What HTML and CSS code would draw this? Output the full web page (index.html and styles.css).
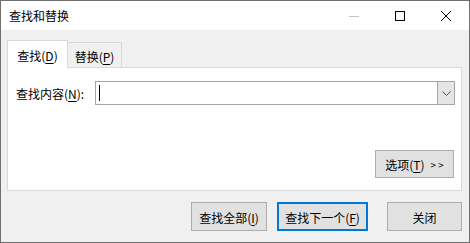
FILE: index.html
```html
<!DOCTYPE html>
<html lang="zh-CN">

<head>
  <meta charset="UTF-8">
  <title>查找和替换</title>
  <link rel="stylesheet" href="styles.css">
</head>

<body>
  <div class="window">

    <div class="titlebar">
      <span class="title">查找和替换</span>
      <div class="caption-btns">
        <span class="cap-btn">
          <svg width="10" height="10" viewBox="0 0 10 10"><path d="M0 5.5h10" stroke="#c4c4c4" stroke-width="1"/></svg>
        </span>
        <span class="cap-btn">
          <svg width="10" height="10" viewBox="0 0 10 10"><rect x="0.5" y="0.5" width="9" height="9" fill="none" stroke="#000" stroke-width="1"/></svg>
        </span>
        <span class="cap-btn">
          <svg width="10" height="10" viewBox="0 0 10 10"><path d="M0 0L10 10M10 0L0 10" stroke="#000" stroke-width="1"/></svg>
        </span>
      </div>
    </div>

    <div class="content">
      <div class="tabs">
        <div class="tab active">查找(<u>D</u>)</div>
        <div class="tab">替换(<u>P</u>)</div>
      </div>

      <div class="panel">
        <div class="find-row">
          <label class="find-label">查找内容(<u>N</u>):</label>
          <div class="combo">
            <div class="combo-input"><span class="caret"></span></div>
            <div class="combo-drop">
              <svg width="9" height="5" viewBox="0 0 9 5"><path d="M0.5 0.5L4.5 4.5L8.5 0.5" fill="none" stroke="#555" stroke-width="1"/></svg>
            </div>
          </div>
        </div>

        <div class="options-row">
          <button class="btn btn-options">选项(<u>T</u>)<span class="more">&gt; &gt;</span></button>
        </div>
      </div>

      <div class="actions">
        <button class="btn btn-all">查找全部(<u>I</u>)</button>
        <button class="btn btn-next">查找下一个(<u>F</u>)</button>
        <button class="btn btn-close">关闭</button>
      </div>
    </div>

  </div>
</body>

</html>
```

FILE: styles.css
```css
*,
*::before,
*::after {
  box-sizing: border-box;
}

body {
  margin: 0;
  font-family: "Noto Sans CJK SC", "Noto Sans", sans-serif;
  font-size: 12px;
  color: #000;
  background: #f0f0f0;
}

u {
  text-decoration-thickness: 1px;
  text-underline-offset: 2px;
}

.window {
  display: flex;
  flex-direction: column;
  width: 470px;
  height: 243px;
  border: 1px solid #6f6f6f;
  background: #f0f0f0;
}

.titlebar {
  display: flex;
  align-items: center;
  height: 29px;
  padding-left: 8px;
  background: #fff;
}

.title {
  line-height: 1;
  font-size: 12px;
}

.caption-btns {
  display: flex;
  margin-left: auto;
  height: 100%;
}

.cap-btn {
  display: flex;
  justify-content: center;
  align-items: center;
  width: 46px;
  height: 100%;
}

.content {
  display: flex;
  flex-direction: column;
  flex: 1;
  padding: 10px 7px 0 6px;
}

.tabs {
  display: flex;
  align-items: flex-end;
  margin-bottom: -1px;
}

.tab {
  display: flex;
  align-items: center;
  justify-content: center;
  width: 54px;
  height: 26px;
  padding-top: 1px;
  border: 1px solid #d9d9d9;
  border-bottom: none;
  border-left: none;
  background: #f0f0f0;
}

.tab.active {
  position: relative;
  z-index: 1;
  width: 61px;
  height: 28px;
  border-left: 1px solid #d9d9d9;
  background: #fff;
}

.panel {
  display: flex;
  flex-direction: column;
  height: 124px;
  padding: 13px 6px 12px 8px;
  border: 1px solid #d9d9d9;
  background: #fff;
}

.find-row {
  display: flex;
  align-items: center;
}

.find-label {
  width: 79px;
  padding-top: 1px;
}

.combo {
  display: flex;
  width: 360px;
  height: 24px;
  border: 1px solid #a6a6a6;
}

.combo-input {
  display: flex;
  align-items: center;
  flex: 1;
  padding-left: 3px;
}

.caret {
  width: 1px;
  height: 16px;
  background: #000;
}

.combo-drop {
  display: flex;
  justify-content: center;
  align-items: center;
  width: 17px;
  border-left: 1px solid #a6a6a6;
  background: #e5e5e5;
}

.options-row {
  display: flex;
  justify-content: flex-end;
  margin-top: auto;
  padding-right: 1px;
}

.btn {
  display: flex;
  justify-content: center;
  align-items: center;
  height: 29px;
  padding: 1px 0 0;
  font: inherit;
  color: #000;
  border: 1px solid #adadad;
  background: #e1e1e1;
}

.btn-options {
  width: 79px;
  height: 28px;
}

.more {
  margin-left: 6px;
  font-size: 10px;
}

.actions {
  display: flex;
  justify-content: flex-end;
  margin-top: 11px;
}

.btn-all {
  width: 76px;
}

.btn-next {
  width: 91px;
  margin-left: 10px;
  border: 2px solid #0078d7;
}

.btn-close {
  width: 75px;
  margin-left: 19px;
}
```
